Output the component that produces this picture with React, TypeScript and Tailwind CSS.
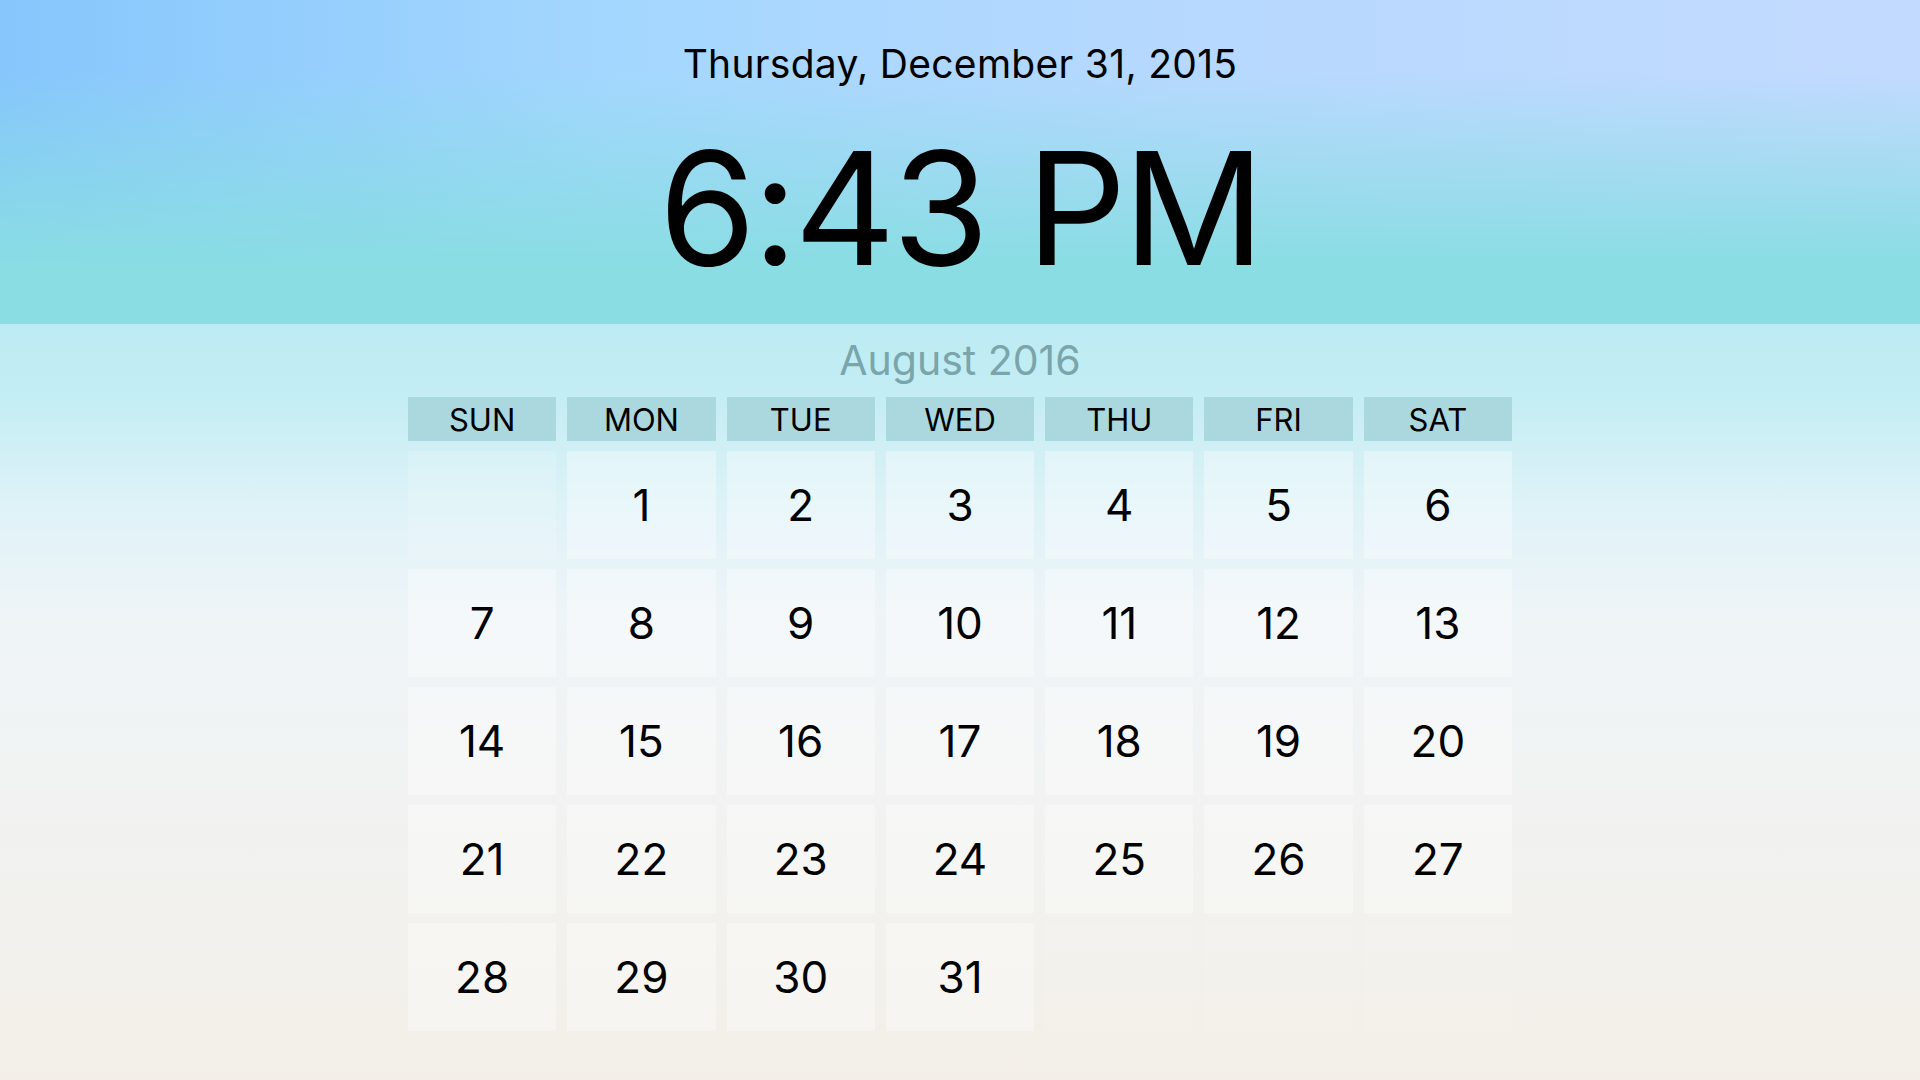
import React from 'react'

const DAYS = ['SUN', 'MON', 'TUE', 'WED', 'THU', 'FRI', 'SAT']

// August 2016 starts on a Monday
const cells: (number | null)[] = [
  null,
  ...Array.from({ length: 31 }, (_, i) => i + 1),
  null,
  null,
  null,
]

const font = { fontFamily: 'Inter, "Noto Sans", sans-serif' }

export default function App() {
  return (
    <div
      style={font}
      className="w-[1920px] h-[1080px] overflow-hidden flex flex-col text-black"
    >
      <header className="h-[324px] shrink-0 flex flex-col items-center pt-[44px] bg-[linear-gradient(180deg,rgba(137,221,227,0)_22%,rgba(137,221,227,0.55)_55%,rgba(137,221,227,1)_82%),linear-gradient(90deg,#86c6fc_0%,#a4d7fe_32%,#b6d8fe_60%,#c3daff_100%)]">
        <p className="text-[39px] leading-none tracking-[0.3px]">
          Thursday, December 31, 2015
        </p>
        <p className="mt-[47px] text-[157px] leading-none tracking-[-3.5px]">
          6:43 PM
        </p>
      </header>

      <main className="flex-1 flex flex-col items-center bg-[linear-gradient(180deg,#bdebf3_0%,#c4edf4_10%,#def2f7_24%,#eef4f7_38%,#f1f3f3_58%,#f2f1ed_78%,#f3efe8_100%)]">
        <h2 className="mt-[16px] text-[41px] leading-none text-[#79a5ab]">
          August 2016
        </h2>

        <div className="mt-[16px] w-[1104px]">
          <div className="grid grid-cols-7 gap-x-[11px]">
            {DAYS.map((d) => (
              <div
                key={d}
                className="h-[44px] flex items-center justify-center bg-[#a7d5dd]/90 text-[31px] leading-none"
              >
                {d}
              </div>
            ))}
          </div>

          <div className="mt-[10px] grid grid-cols-7 gap-x-[11px] gap-y-[10px]">
            {cells.map((n, i) => (
              <div
                key={i}
                className={`h-[108px] flex items-center justify-center text-[44px] leading-none ${
                  n === null ? (i === 0 ? 'bg-white/15' : 'bg-white/5') : 'bg-white/35'
                }`}
              >
                {n}
              </div>
            ))}
          </div>
        </div>
      </main>
    </div>
  )
}
